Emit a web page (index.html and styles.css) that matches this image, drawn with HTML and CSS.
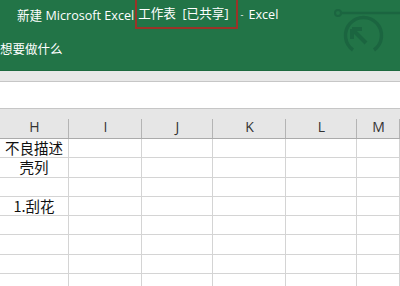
FILE: index.html
```html
<!DOCTYPE html>
<html>
<head>
<meta charset="utf-8">
<link rel="stylesheet" href="styles.css">
</head>
<body>
<div class="app">
  <header class="ribbon">
    <div class="title">
      <span>新建 Microsoft Excel</span>
      <span class="shared">工作表&nbsp;&nbsp;[已共享]</span>
      <span class="dash">-</span>
      <span>Excel</span>
    </div>
    <div class="tell">想要做什么</div>
    <svg class="deco" width="70" height="60" viewBox="0 0 70 60">
      <circle cx="8" cy="13" r="3" fill="none" stroke="#1b6540" stroke-width="2"/>
      <line x1="11" y1="13" x2="70" y2="13" stroke="#1b6540" stroke-width="2.5"/>
      <path d="M23 50 A18 18 0 1 1 44 50" fill="none" stroke="#1b6540" stroke-width="3.5"/>
      <path d="M22 29 L22 39 M22 29 L32 29 M23 30 L36 43" fill="none" stroke="#1b6540" stroke-width="4"/>
    </svg>
  </header>
  <div class="band"></div>
  <div class="formula"></div>
  <div class="sheet">
    <div class="colhead">
      <div class="ch">H</div><div class="ch">I</div><div class="ch">J</div><div class="ch">K</div><div class="ch">L</div><div class="ch">M</div>
    </div>
    <div class="row"><div class="c">不良描述</div><div class="c"></div><div class="c"></div><div class="c"></div><div class="c"></div><div class="c"></div></div>
    <div class="row"><div class="c">壳列</div><div class="c"></div><div class="c"></div><div class="c"></div><div class="c"></div><div class="c"></div></div>
    <div class="row"><div class="c"></div><div class="c"></div><div class="c"></div><div class="c"></div><div class="c"></div><div class="c"></div></div>
    <div class="row"><div class="c">1.刮花</div><div class="c"></div><div class="c"></div><div class="c"></div><div class="c"></div><div class="c"></div></div>
    <div class="row"><div class="c"></div><div class="c"></div><div class="c"></div><div class="c"></div><div class="c"></div><div class="c"></div></div>
    <div class="row"><div class="c"></div><div class="c"></div><div class="c"></div><div class="c"></div><div class="c"></div><div class="c"></div></div>
    <div class="row"><div class="c"></div><div class="c"></div><div class="c"></div><div class="c"></div><div class="c"></div><div class="c"></div></div>
    <div class="row"><div class="c"></div><div class="c"></div><div class="c"></div><div class="c"></div><div class="c"></div><div class="c"></div></div>
  </div>
</div>
</body>
</html>
```
FILE: styles.css
```css
html, body {
  margin: 0;
  padding: 0;
  width: 400px;
  height: 286px;
  overflow: hidden;
  background: #ffffff;
}
.app {
  font-family: "Open Sans", "Noto Sans CJK SC", sans-serif;
  width: 400px;
}
.ribbon {
  position: relative;
  height: 70px;
  background: #227447;
  border-bottom: 1px solid #1d6a40;
  color: #ffffff;
}
.title {
  display: flex;
  align-items: center;
  height: 28px;
  padding-left: 17px;
  font-size: 12.6px;
  white-space: nowrap;
}
.shared {
  margin-left: 1px;
  padding: 0 7px 0 1px;
  height: 29px;
  line-height: 28px;
  box-sizing: border-box;
  border: 2px solid #9a3328;
  border-top: none;
  margin-top: 1px;
}
.dash {
  margin: 0 5px 0 3px;
  font-size: 9px;
}
.tell {
  margin-top: 11px;
  font-size: 12.5px;
  font-family: "Noto Sans CJK SC", sans-serif;
}
.deco {
  position: absolute;
  left: 330px;
  top: 0;
}
.band {
  height: 10px;
  background: #e8e8e8;
  border-bottom: 1px solid #c6c6c6;
}
.formula {
  height: 26px;
  background: #ffffff;
  border-bottom: 1px solid #c6c6c6;
}
.sheet {
  font-family: "Noto Sans CJK SC", sans-serif;
}
.colhead {
  display: grid;
  grid-template-columns: 69px 73px 71px 73px 71px 43px;
  height: 29px;
  background: #e6e6e6;
  border-bottom: 1px solid #ababab;
}
.ch {
  display: flex;
  align-items: flex-end;
  justify-content: center;
  padding-bottom: 2px;
  font-family: "Open Sans", sans-serif;
  font-size: 14px;
  color: #333333;
  background: linear-gradient(#b4b4b4, #b4b4b4) right bottom / 1px 19px no-repeat;
}
.row {
  display: grid;
  grid-template-columns: 69px 73px 71px 73px 71px 43px;
  height: 19.3px;
}
.c {
  display: flex;
  align-items: center;
  justify-content: center;
  border-right: 1px solid #d4d4d4;
  border-bottom: 1px solid #d4d4d4;
  box-sizing: border-box;
  font-size: 14.5px;
  line-height: 18px;
  color: #111111;
  white-space: nowrap;
}
```
